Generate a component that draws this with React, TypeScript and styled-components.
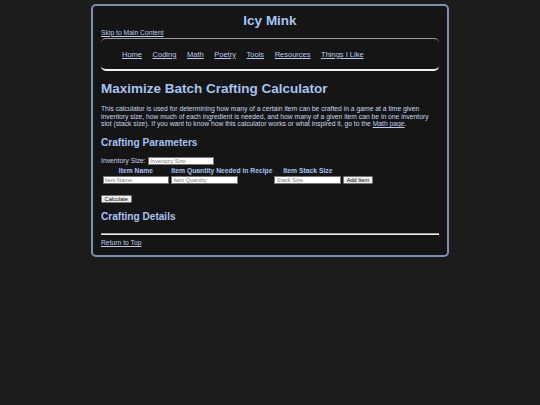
import React from "react";
import styled, { createGlobalStyle } from "styled-components";

const GlobalStyle = createGlobalStyle`
  html, body {
    margin: 0;
    background: #1c1c1c;
  }
  body {
    padding-top: 4px;
    font-family: "Liberation Sans", Arial, sans-serif;
  }
`;

const heading = "#a6c4f2";
const text = "#c9d5ef";
const link = "#bccbea";

const Page = styled.div`
  width: 338px;
  margin: 0 auto;
  padding: 0 8px 8px;
  border: 2px solid #7e8fb2;
  border-radius: 5px;
  background: #151515;
  color: ${text};
  font-size: 6.75px;
  line-height: 7.76px;
`;

const SiteTitle = styled.h1`
  margin: 7.2px 0 0;
  font-size: 13.5px;
  line-height: 15.5px;
  font-weight: bold;
  text-align: center;
  color: ${heading};
`;

const SkipRow = styled.div`
  margin-top: 0;
`;

const TextLink = styled.a`
  color: ${link};
  text-decoration: underline;
  text-underline-offset: 0.5px;
`;

const Nav = styled.nav`
  margin-top: 1.5px;
  border-top: 1.5px solid #9d9d9d;
  border-bottom: 2px solid #f0f0f0;
  border-left: 0;
  border-right: 0;
  border-radius: 5px;
`;

const NavList = styled.ul`
  margin: 0;
  list-style: none;
  height: 30px;
  box-sizing: border-box;
  padding: 2px 0 0 21px;
  display: flex;
  align-items: center;
  gap: 10.6px;
`;

const NavLink = styled.a`
  font-size: 7.5px;
  line-height: 8.6px;
  color: ${link};
  text-decoration: underline;
`;

const PageTitle = styled.h1`
  margin: 10px 0 0;
  font-size: 13.5px;
  line-height: 15.5px;
  font-weight: bold;
  color: ${heading};
`;

const Intro = styled.p`
  margin: 8.5px 0 0;
`;

const SectionTitle = styled.h2<{ $gap: number }>`
  margin: ${(p) => p.$gap}px 0 0;
  font-size: 10.1px;
  line-height: 11.6px;
  font-weight: bold;
  color: ${heading};
`;

const FieldRow = styled.div`
  margin-top: 8.7px;
  height: 8px;
  display: flex;
  align-items: center;
  gap: 2.4px;
`;

const TextInput = styled.input`
  box-sizing: border-box;
  width: ${(p) => (p.width ? `${p.width}px` : "66.7px")};
  height: 8px;
  margin: 0;
  padding: 0 1.2px;
  border: 0.8px solid #767676;
  border-radius: 0;
  background: #ffffff;
  font-family: "Liberation Sans", Arial, sans-serif;
  font-size: 5.6px;
  color: #000;
  &::placeholder {
    color: #7a7a7a;
  }
`;

const ItemTable = styled.table`
  border-spacing: 1px;
  margin: 0;
`;

const HeadCell = styled.th`
  padding: 0.5px;
  font-weight: bold;
  text-align: center;
  color: ${heading};
  font-size: 6.75px;
  line-height: 7.76px;
`;

const Cell = styled.td`
  padding: 0.5px;
  vertical-align: middle;
  line-height: 0;
`;

const Button = styled.button<{ $top?: number }>`
  box-sizing: border-box;
  height: 7.8px;
  margin: ${(p) => (p.$top ? `${p.$top}px 0 0` : "0")};
  padding: 0 2.6px;
  border: 0.8px solid #767676;
  border-radius: 1.3px;
  background: #efefef;
  color: #000;
  font-family: "Liberation Sans", Arial, sans-serif;
  font-size: 5.6px;
  line-height: 6px;
  display: block;
`;

const Rule = styled.hr`
  margin: 9.9px 0 0;
  height: 0;
  border-top: 1.5px solid #a0a0a0;
  border-left: 1px solid #a0a0a0;
  border-bottom: 1.8px solid #f0f0f0;
  border-right: 1px solid #f0f0f0;
`;

const Footer = styled.div`
  margin-top: 4.2px;
`;

export default function App() {
  const navItems = ["Home", "Coding", "Math", "Poetry", "Tools", "Resources", "Things I Like"];
  return (
    <>
      <GlobalStyle />
      <Page id="top">
        <SiteTitle>Icy Mink</SiteTitle>
        <SkipRow>
          <TextLink href="#main">Skip to Main Content</TextLink>
        </SkipRow>
        <Nav>
          <NavList>
            {navItems.map((n) => (
              <li key={n}>
                <NavLink href="#">{n}</NavLink>
              </li>
            ))}
          </NavList>
        </Nav>
        <main id="main">
          <PageTitle>Maximize Batch Crafting Calculator</PageTitle>
          <Intro>
            This calculator is used for determining how many of a certain item can be crafted in a game at a time given
            inventory size, how much of each ingredient is needed, and how many of a given item can be in one inventory
            slot (stack size). If you want to know how this calculator works or what inspired it, go to the{" "}
            <TextLink href="#">Math page</TextLink>.
          </Intro>
          <SectionTitle $gap={8.6}>Crafting Parameters</SectionTitle>
          <FieldRow>
            <span>Inventory Size:</span>
            <TextInput width={66} placeholder="Inventory Size" />
          </FieldRow>
          <ItemTable>
            <thead>
              <tr>
                <HeadCell>Item Name</HeadCell>
                <HeadCell>Item Quantity Needed in Recipe</HeadCell>
                <HeadCell>Item Stack Size</HeadCell>
                <HeadCell />
              </tr>
            </thead>
            <tbody>
              <tr>
                <Cell>
                  <TextInput placeholder="Item Name" />
                </Cell>
                <Cell>
                  <TextInput placeholder="Item Quantity" />
                </Cell>
                <Cell>
                  <TextInput placeholder="Stack Size" />
                </Cell>
                <Cell>
                  <Button>Add Item</Button>
                </Cell>
              </tr>
            </tbody>
          </ItemTable>
          <Button $top={9.2}>Calculate</Button>
          <SectionTitle $gap={8.5}>Crafting Details</SectionTitle>
          <Rule />
        </main>
        <Footer>
          <TextLink href="#top">Return to Top</TextLink>
        </Footer>
      </Page>
    </>
  );
}
